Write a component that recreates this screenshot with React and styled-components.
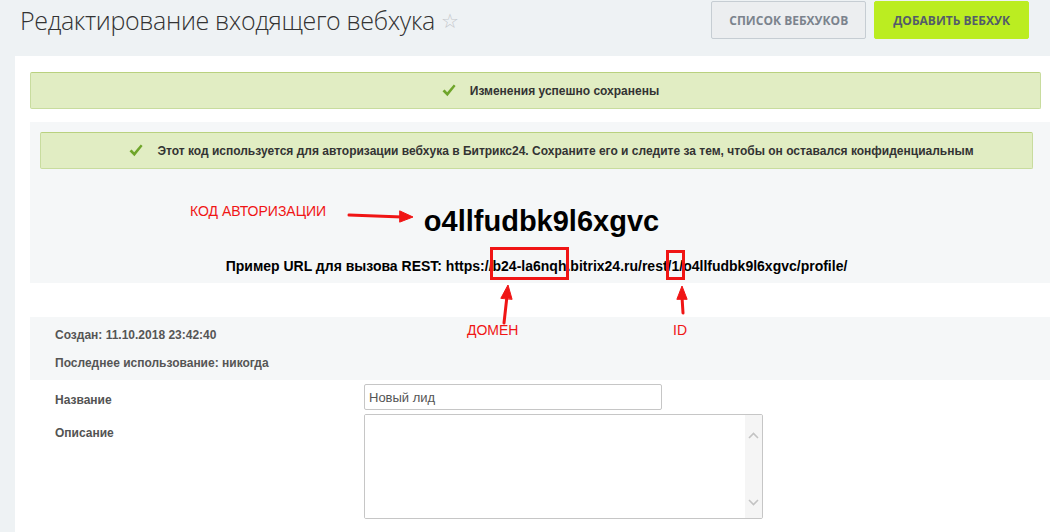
import React from "react";
import styled, { createGlobalStyle } from "styled-components";

const GlobalStyle = createGlobalStyle`
  html, body {
    margin: 0;
    padding: 0;
    height: 532px;
    overflow: hidden;
    background: #eef2f4;
  }
  body {
    font-family: "Liberation Sans", Arial, sans-serif;
  }
`;

const Page = styled.div`
  position: relative;
  height: 532px;
  overflow: hidden;
`;

const Header = styled.header`
  display: flex;
  align-items: center;
  height: 40px;
  padding: 0 21px 0 20px;
  margin-bottom: 16px;
`;

const Title = styled.h1`
  flex: 1;
  margin: 0;
  font-family: "Open Sans", sans-serif;
  font-weight: 300;
  font-size: 25px;
  letter-spacing: -0.35px;
  line-height: 40px;
  color: #333;
  white-space: nowrap;
`;

const Star = styled.span`
  margin-left: 6px;
  font-family: "DejaVu Sans", sans-serif;
  font-size: 20px;
  color: #c4c7cb;
  vertical-align: 2px;
`;

const Button = styled.button`
  height: 38px;
  padding: 0 ${(p) => (p.$primary ? "18px" : "17px")};
  margin-left: 8px;
  border: 1px solid ${(p) => (p.$primary ? "#bbed21" : "#c6cdd3")};
  border-radius: 2px;
  background: ${(p) => (p.$primary ? "#bbed21" : "#eceef0")};
  color: ${(p) => (p.$primary ? "#535c69" : "#7b838d")};
  font-family: "Open Sans", sans-serif;
  font-weight: 700;
  font-size: 12px;
  text-transform: uppercase;
  cursor: pointer;
`;

const Panel = styled.main`
  margin-left: 15px;
  height: 476px;
  padding: 16px 0 0 15px;
  background: #fff;
  box-sizing: border-box;
`;

const Alert = styled.div`
  display: flex;
  align-items: center;
  justify-content: center;
  gap: 14px;
  height: 37px;
  box-sizing: border-box;
  padding-left: 30px;
  margin: ${(p) => p.$margin};
  background: #e1edc3;
  border: 1px solid #c8dc9e;
  border-top-color: #b9d17f;
  border-radius: 2px;
  font-weight: 700;
  font-size: 12px;
  color: #333;
  white-space: nowrap;
`;

const GreyBlock = styled.section`
  background: #f5f7f8;
  padding: ${(p) => p.$padding};
  margin-top: ${(p) => p.$top};
  height: ${(p) => p.$height};
  box-sizing: border-box;
`;

const Code = styled.div`
  margin-top: 35px;
  padding-left: 10px;
  text-align: center;
  font-weight: 700;
  font-size: 29px;
  line-height: 34px;
  color: #000;
`;

const RestUrl = styled.div`
  margin-top: 19px;
  text-align: center;
  font-weight: 700;
  font-size: 14px;
  line-height: 18px;
  color: #000;
`;

const Marked = styled.span`
  position: relative;
  &::after {
    content: "";
    position: absolute;
    left: ${(p) => p.$l}px;
    right: ${(p) => p.$r}px;
    top: ${(p) => p.$t}px;
    bottom: -6px;
    border: 3px solid #f01515;
  }
`;

const InfoRow = styled.div`
  font-weight: 700;
  font-size: 12px;
  line-height: 18px;
  color: #555;
  & + & {
    margin-top: 10px;
  }
`;

const FormRow = styled.div`
  display: grid;
  grid-template-columns: 309px 1fr;
  padding-left: 25px;
  margin-top: 4px;
`;

const Label = styled.label`
  padding-top: ${(p) => p.$top};
  font-weight: 700;
  font-size: 12px;
  line-height: 18px;
  color: #535353;
`;

const TextInput = styled.input`
  width: 298px;
  height: 26px;
  box-sizing: border-box;
  padding: 0 4px;
  border: 1px solid #c6c6c6;
  border-radius: 2px;
  font-family: "Liberation Sans", Arial, sans-serif;
  font-size: 13px;
  color: #555;
  outline: none;
`;

const AreaBox = styled.div`
  display: flex;
  width: 399px;
  height: 105px;
  box-sizing: border-box;
  border: 1px solid #c6c6c6;
  border-radius: 2px;
  overflow: hidden;
`;

const Area = styled.textarea`
  flex: 1;
  border: 0;
  resize: none;
  outline: none;
  font-family: "Liberation Sans", Arial, sans-serif;
  font-size: 13px;
  overflow: hidden;
`;

const ScrollTrack = styled.div`
  display: flex;
  flex-direction: column;
  justify-content: space-between;
  align-items: center;
  width: 17px;
  padding: 17px 0 12px;
  background: #f5f5f5;
`;

const Marks = styled.div`
  position: absolute;
  inset: 0;
  pointer-events: none;
`;

const Note = styled.span`
  position: absolute;
  left: ${(p) => p.$x}px;
  top: ${(p) => p.$y}px;
  font-family: "Liberation Sans", Arial, sans-serif;
  font-size: 14px;
  color: #f01515;
`;

const ArrowSvg = styled.svg`
  position: absolute;
  left: 0;
  top: 0;
`;

const Check = () => (
  <svg width="14" height="13" viewBox="0 0 14 13">
    <path d="M0.5 7.2 L2.6 5.4 L5.2 8.3 L11.8 0.5 L13.6 2 L5.4 12.2 Z" fill="#6fa52a" />
  </svg>
);

const Chevron = ({ up }) => (
  <svg width="11" height="7" viewBox="0 0 11 7">
    <path d={up ? "M1 6 L5.5 1.5 L10 6" : "M1 1 L5.5 5.5 L10 1"} fill="none" stroke="#c3c3c3" strokeWidth="1.6" />
  </svg>
);

const App = () => {
  return (
    <Page>
      <GlobalStyle />
      <Header>
        <Title>
          Редактирование входящего вебхука<Star>☆</Star>
        </Title>
        <Button>Список вебхуков</Button>
        <Button $primary>Добавить вебхук</Button>
      </Header>

      <Panel>
        <Alert $margin="0 9px 0 0">
          <Check />
          Изменения успешно сохранены
        </Alert>

        <GreyBlock $top="13px" $height="161px" $padding="10px 17px 0 10px">
          <Alert $margin="0">
            <Check />
            Этот код используется для авторизации вебхука в Битрикс24. Сохраните его и следите за тем, чтобы он оставался конфиденциальным
          </Alert>
          <Code>o4llfudbk9l6xgvc</Code>
          <RestUrl>
            Пример URL для вызова REST: https://
            <Marked $l={-3} $r={-3} $t={-11}>b24-la6nqh</Marked>
            .bitrix24.ru/rest/
            <Marked $l={-5} $r={-6} $t={-8}>1</Marked>
            /o4llfudbk9l6xgvc/profile/
          </RestUrl>
        </GreyBlock>

        <GreyBlock $top="34px" $height="63px" $padding="9px 25px">
          <InfoRow>Создан: 11.10.2018 23:42:40</InfoRow>
          <InfoRow>Последнее использование: никогда</InfoRow>
        </GreyBlock>

        <FormRow>
          <Label $top="7px">Название</Label>
          <TextInput defaultValue="Новый лид" />
        </FormRow>
        <FormRow>
          <Label $top="10px">Описание</Label>
          <AreaBox>
            <Area />
            <ScrollTrack>
              <Chevron up />
              <Chevron />
            </ScrollTrack>
          </AreaBox>
        </FormRow>
      </Panel>

      <Marks>
        <Note $x={190} $y={203}>КОД АВТОРИЗАЦИИ</Note>
        <Note $x={467} $y={322}>ДОМЕН</Note>
        <Note $x={673} $y={322}>ID</Note>
        <ArrowSvg width="1050" height="532">
          <g fill="#f01515" stroke="#f01515" strokeWidth="3" strokeLinecap="round">
            <line x1="349" y1="215" x2="402" y2="217" />
            <path d="M400 211 L413 217 L400 222 Z" strokeWidth="1" />
            <line x1="504" y1="323" x2="507" y2="296" />
            <path d="M501 298 L508 285 L512 299 Z" strokeWidth="1" />
            <line x1="683" y1="313" x2="682" y2="297" />
            <path d="M677 299 L682 286 L687 299 Z" strokeWidth="1" />
          </g>
        </ArrowSvg>
      </Marks>
    </Page>
  );
};

export default App;
